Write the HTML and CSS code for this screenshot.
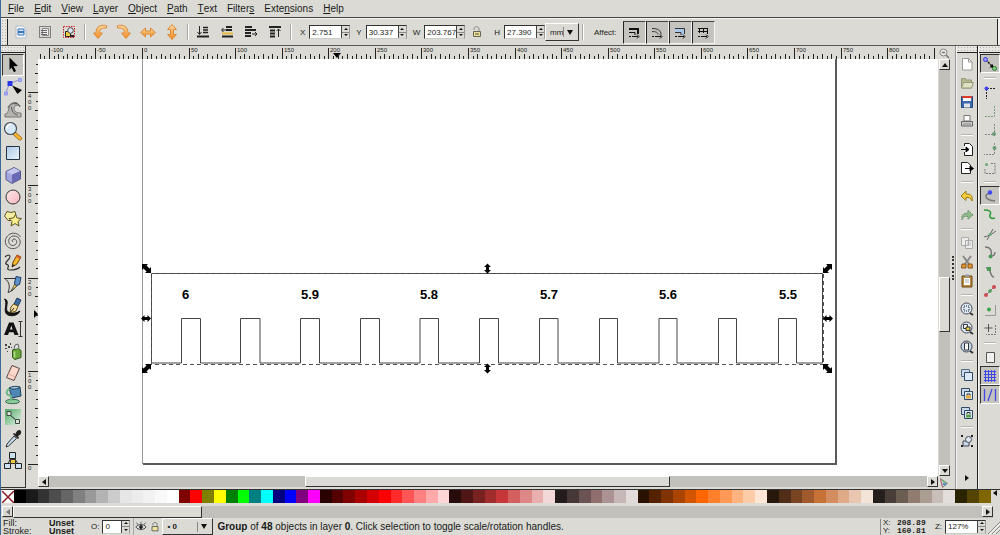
FILE: index.html
```html
<!DOCTYPE html>
<html lang="en">
<head>
<meta charset="utf-8">
<title>Inkscape</title>
<link rel="stylesheet" href="styles.css">
</head>
<body>
<div class="app">
  <nav class="menubar">
    <button><u>F</u>ile</button><button><u>E</u>dit</button><button><u>V</u>iew</button><button><u>L</u>ayer</button><button><u>O</u>bject</button><button><u>P</u>ath</button><button><u>T</u>ext</button><button>Filter<u>s</u></button><button>Exte<u>n</u>sions</button><button><u>H</u>elp</button>
  </nav>

  <div class="toolbar">
    <span class="grip grip-v"></span>
    <div class="tool-group">
      <button aria-label="Select all"><svg viewBox="0 0 16 16"><path d="M3 2h7l3 3v9H3z" fill="#f5f7fa" stroke="#b8bdc4"/><path d="M5 5h6v6H5z" fill="#d4e4f5" stroke="#3b74b5"/><path d="M5 8h6" stroke="#3b74b5" stroke-width="2"/></svg></button>
      <button aria-label="Select all in all layers"><svg viewBox="0 0 16 16"><path d="M2.500 2.500h11v11h-11z" fill="none" stroke="#222" stroke-dasharray="1 1"/><path d="M5.500 4.500h6v7h-6z" fill="#eee" stroke="#888"/><path d="M4 6.500h6M4 8.500h6M4 10.500h6" stroke="#666"/></svg></button>
      <button aria-label="Deselect"><svg viewBox="0 0 16 16"><path d="M2.500 2.500h11v11h-11z" fill="none" stroke="#d21f2b" stroke-dasharray="1.500 1"/><path d="M4.500 7.500h5v5h-5z" fill="#f2cf3b" stroke="#222"/><circle cx="9.500" cy="6.500" r="2.800" fill="#dfe9f5" stroke="#444"/><path d="M10 12h3" stroke="#222" stroke-width="2"/></svg></button>
    </div>
    <span class="vsep"></span>
    <div class="tool-group orange">
      <button aria-label="Rotate left"><svg viewBox="0 0 16 16"><path d="M14.500 1.500C9 .5 4 2 4 9H1.500L6 14.500 10.500 9H7.500C7.500 5 10 4 14.500 4z"/></svg></button>
      <button aria-label="Rotate right"><svg viewBox="0 0 16 16"><path d="M1.500 1.500C7 .5 12 2 12 9h2.500L10 14.500 5.500 9h3C8.500 5 6 4 1.500 4z"/></svg></button>
      <button aria-label="Flip horizontal"><svg viewBox="0 0 16 16"><path d="M.5 8.500L5.500 4v3h5V4l5 4.500-5 4.500v-3h-5v3z"/></svg></button>
      <button aria-label="Flip vertical"><svg viewBox="0 0 16 16"><path d="M8 .5L12.500 5.500h-3v5h3L8 15.500 3.500 10.500h3v-5h-3z"/></svg></button>
    </div>
    <span class="vsep"></span>
    <div class="tool-group dark">
      <button aria-label="Lower to bottom"><svg viewBox="0 0 16 16"><path d="M8 3.500h5M8 6h5M8 8.500h5" stroke-width="1.500"/><path d="M4.500 2v8M2.500 8l2 2.500 2-2.500"/><path d="M2 12.500h12" stroke-width="2"/></svg></button>
      <button aria-label="Lower"><svg viewBox="0 0 16 16"><path d="M7 3h6M7 6h6M3 12.500h11" stroke-width="2"/><path class="gold" d="M3 9.500h11" stroke-width="2"/><path d="M7 6H3M4.500 4L2.500 6l2 2"/></svg></button>
      <button aria-label="Raise"><svg viewBox="0 0 16 16"><path d="M2 3h7M2 6h11M2 9h6M2 12h6" stroke-width="2"/><path d="M9 10h4M12 8l2 2-2 2"/></svg></button>
      <button aria-label="Raise to top"><svg viewBox="0 0 16 16"><path d="M2 3h12M3 6.500h5M3 9.500h5M3 12.500h5" stroke-width="2"/><path d="M11.500 13V5M9.500 7l2-2 2 2"/></svg></button>
    </div>
    <span class="vsep"></span>
    <div class="fields">
      <label>X <span class="spin"><input type="text" value="2.751"><span class="steps"><button aria-label="Increase X"></button><button aria-label="Decrease X"></button></span></span></label>
      <label>Y <span class="spin"><input type="text" value="30.337"><span class="steps"><button aria-label="Increase Y"></button><button aria-label="Decrease Y"></button></span></span></label>
      <label>W <span class="spin"><input type="text" value="203.767"><span class="steps"><button aria-label="Increase W"></button><button aria-label="Decrease W"></button></span></span></label>
    </div>
    <button class="lock" aria-label="Lock proportions"><svg viewBox="0 0 16 16"><path d="M5 6V5c0-3 5-3 5 0v2" fill="none" stroke="#888"/><path d="M4.500 7.500h7v5h-7z" fill="#eadf9a" stroke="#6b6650"/><path d="M6 10h4" stroke="#5b5640"/></svg></button>
    <label>H <span class="spin"><input type="text" value="27.390"><span class="steps"><button aria-label="Increase H"></button><button aria-label="Decrease H"></button></span></span></label>
    <span class="combo unit"><select aria-label="Unit"><option>mm</option></select></span>
    <span class="vsep"></span>
    <span class="affect">Affect:</span>
    <div class="toggles">
      <button aria-label="Scale stroke width"><svg viewBox="0 0 16 16"><path d="M3 4h9v5" fill="none" stroke="#111" stroke-width="2"/><path d="M3 7.500h6V10" fill="none" stroke="#111"/><path d="M3 11.500h2M6 11.500h6M11 9.500l2 2-2 2" fill="none" stroke="#111"/></svg></button>
      <button aria-label="Scale rounded corners"><svg viewBox="0 0 16 16"><path d="M3 3.500c6 0 9 2 9 6M3 6.500c4 0 6 1 6 3" fill="none" stroke="#333"/><path d="M3 11.500h2M6 11.500h6M11 9.500l2 2-2 2" fill="none" stroke="#111"/></svg></button>
      <button aria-label="Move gradients"><svg viewBox="0 0 16 16"><path d="M3 4h9v6H9V7H3z" fill="#a9c8e8"/><path d="M3 3.500h9.500V9M3 7.500h6V10" fill="none" stroke="#333"/><path d="M3 11.500h2M6 11.500h6M11 9.500l2 2-2 2" fill="none" stroke="#111"/></svg></button>
      <button aria-label="Move patterns"><svg viewBox="0 0 16 16"><path d="M3 3.500h10M3 6.500h10M4.500 3v5M8.500 3v5M12.500 3v6" fill="none" stroke="#111"/><path d="M3 11.500h2M6 11.500h6M11 9.500l2 2-2 2" fill="none" stroke="#111"/></svg></button>
    </div>
    <span class="toolbar-end"></span>
  </div>

  <main class="workspace">
    <aside class="toolbox">
      <span class="grip grip-h"></span>
      <button class="active" aria-label="Selector"><svg viewBox="0 0 20 20"><path d="M6.500 2.500l8.500 8.500-4.500.3 2.500 4.700-2 1.200L8.500 12.500 6.500 15z" fill="#000"/></svg></button>
      <button aria-label="Node"><svg viewBox="0 0 20 20"><path d="M3 17C4 9 8 4 18 3" fill="none" stroke="#8a8ac8"/><path d="M1.500 15h3v3h-3zM15.500 1.500h3v3h-3z" fill="#aab0ff" stroke="#8d96ee"/><path d="M4.500 4h5v5h-5z" fill="#2c35e8"/><path d="M9 8.500l10 4.500-4.500 4z" fill="#000"/></svg></button>
      <button aria-label="Tweak"><svg viewBox="0 0 20 20"><path d="M2 15c3 0 3-3 4-6 1-5 8-7 11-2-3-2-6 0-6 2 0 4 3 5 7 5v4H2z" fill="#b5b4b0" stroke="#777"/><path d="M5 9c1-4 5-6 9-5M8.500 8c0 4 2 7 6 8M11 5c3-1 5 0 6 3" fill="none" stroke="#555"/></svg></button>
      <button aria-label="Zoom"><svg viewBox="0 0 20 20"><path d="M11.500 12.500l5.500 5" stroke="#a66a12" stroke-width="4" stroke-linecap="round"/><path d="M12 13l5 4.500" stroke="#f7b733" stroke-width="2.500" stroke-linecap="round"/><circle cx="7.500" cy="7.500" r="6" fill="#d6e8f8" stroke="#45505c" stroke-width="1.200"/><path d="M4 7.500c0-3 2-4 4-4" fill="none" stroke="#fff" stroke-width="1.500"/></svg></button>
      <button aria-label="Rectangle"><svg viewBox="0 0 20 20"><path d="M3.500 3.500h13v13h-13z" fill="url(#blue)" stroke="#243244"/></svg></button>
      <button aria-label="3D box"><svg viewBox="0 0 20 20"><path d="M3 6.500L11 2.500l6.500 3.500v8L9 18.500l-6-4z" fill="#a3a5dc" stroke="#55558a"/><path d="M9 9.500l8-3.500v8L9 18z" fill="#6a6ab4"/><path d="M3.500 7L11 3l6 3-8 3.500z" fill="#c6c8f0"/></svg></button>
      <button aria-label="Ellipse"><svg viewBox="0 0 20 20"><circle cx="10" cy="10" r="7" fill="url(#pink)" stroke="#333"/></svg></button>
      <button aria-label="Star"><svg viewBox="0 0 20 20"><path d="M4 2.500l4 1 4-1 1 4-2 5-6 0L1.500 7z" fill="#f6eca2" stroke="#5d5620"/><path d="M12.500 5.500l1.500 3.500 4.500.5-3.500 3 1 4.500-4-2.500-4 2.500 1-4.500-3-3 4.500-.5z" fill="#fbee8e" stroke="#5d5620"/></svg></button>
      <button aria-label="Spiral"><svg viewBox="0 0 20 20"><path d="M10 11c-1.500-1-.5-3 1-3 2.500 0 3.500 3 2 5-2 2.500-6 1.800-7-1.200C4.800 8 7.500 5 11 5c4 0 7 3.500 6 7.500-1 4-5 5.500-8.500 5C4 17 1.500 12.500 2.500 8.500 3.500 5 7 2.200 10.500 2.200c3 0 5.500 1.300 7 3.800" fill="none" stroke="#555"/></svg></button>
      <button aria-label="Pencil"><svg viewBox="0 0 20 20"><path d="M2 4c4-4 7-1 3 3s-2 4 0 5-3 5 2 5c4 0 7 0 10-3" fill="none" stroke="#333" stroke-width="1.200"/><path d="M9 14l1-5 4-7 4 2-4 7z" fill="#f6b62e" stroke="#704b0c"/><path d="M9 14l.5-3 2.500 1.500z" fill="#222"/><path d="M14 2l4 2-1 2-4-2z" fill="#d85a2a"/></svg></button>
      <button aria-label="Bezier"><svg viewBox="0 0 20 20"><path d="M1 3.500h12M2 3.500c5 4 5 9 3 14 3-1 7-3 8-7" fill="none" stroke="#333"/><path d="M13 1.500l5 1-1.500 7-4 1.500-1-3z" fill="#5b92c8" stroke="#1f3c60"/><path d="M11.500 9.500l2.500 1.500-6 5z" fill="#f0d15a" stroke="#333" stroke-width=".7"/></svg></button>
      <button aria-label="Calligraphy"><svg viewBox="0 0 20 20"><path d="M1.500 2c6 1-.5 10 3.500 13 4 2 9 1 12-1-2 5-10 6-13.500 3C0 13 5 6 1.500 2z" fill="#111" stroke="#111"/><path d="M14 1l4 2-3 6-4-2z" fill="#3c6d9c" stroke="#1f3c60"/><path d="M10.500 7l4.500 2-2 5-6 2 1-6z" fill="#f5dfa0" stroke="#6a5212"/><path d="M7 16l4-5" stroke="#222"/></svg></button>
      <button aria-label="Text"><svg viewBox="0 0 20 20"><path d="M1 16h4l1-2.700h4.500l1 2.700h4L10.500 3.500h-4.500z M7 10.500l1.300-4 1.300 4z" fill="#111" fill-rule="evenodd"/><path d="M15.500 2.500h4M15.500 17.500h4M17.500 3v14" stroke="#333"/></svg></button>
      <button aria-label="Spray"><svg viewBox="0 0 20 20"><path d="M2 3h2v2H2zM5 5h2v2H5zM2 7h2v1H2zM7 2h1v2H7zM8 6h1v1H8zM4 10h1v1H4z" fill="#444"/><path d="M9.500 9l6-1.500 2.500 2v7l-6 2-2.500-2z" fill="#68a83a" stroke="#34591a"/><path d="M11 8l1-4 3-1 1 4" fill="#ddd" stroke="#666"/><path d="M11.500 10.500v6" stroke="#b9e08f" stroke-width="1.500"/></svg></button>
      <button aria-label="Eraser"><svg viewBox="0 0 20 20"><path d="M9 2.500l7.500 3-5.500 12-7.500-3z" fill="#fbd7cc" stroke="#5c4440"/><path d="M5 11l7.500 3" stroke="#e5aa9c"/></svg></button>
      <button aria-label="Paint bucket"><svg viewBox="0 0 20 20"><ellipse cx="9.500" cy="16.500" rx="7" ry="2.200" fill="#8ccb9a" stroke="#336a4a"/><path d="M6 3l11-1 1 9-9 2z" fill="#4e86b4" stroke="#22405c"/><path d="M7 4c-4 1-4 4-2 6l3 1v5" fill="none" stroke="#6db888" stroke-width="2"/><path d="M6 3c3-2 8-2 11-1-2 2-8 3-11 1z" fill="#a8cce4" stroke="#22405c"/></svg></button>
      <button aria-label="Gradient"><svg viewBox="0 0 20 20"><path d="M2 2h16v16H2z" fill="url(#green)"/><path d="M6 7l8 7" stroke="#222"/><path d="M4 4.500h4v4H4zM12.500 12.500h4v4h-4z" fill="#cfe9d4" stroke="#444"/></svg></button>
      <button aria-label="Dropper"><svg viewBox="0 0 20 20"><path d="M3 18l1-3 7-8 2.500 2.500-8 7.500z" fill="#c5d9ea" stroke="#333"/><path d="M10 5l5 5 1-1-1-2c3-1 4-4 2.500-5.500S13 2 12.500 5l-1.500-1z" fill="#222"/></svg></button>
      <button aria-label="Connector"><svg viewBox="0 0 20 20"><path d="M5 13L8 6M15 13l-4-7" stroke="#333"/><path d="M6.500 1.500h6v6h-6zM1.500 12.500h6v5h-6zM12.500 12.500h6v5h-6z" fill="#cfe0f2" stroke="#222"/><path d="M7.500 8.500h5v4h-5z" fill="#f2c83c" stroke="#333"/></svg></button>
    </aside>

    <section class="editor">
      <span class="corner"></span>
      <svg class="ruler ruler-x" id="ruler-x"><path d="M295 7h8l-4 5z"/></svg>
      <button class="corner" aria-label="Zoom drawing"><svg viewBox="0 0 12 12"><circle cx="5.500" cy="5.500" r="3.500" fill="#e8e8e6" stroke="#888"/><path d="M4 5.500h3M8 8l3 3" stroke="#777" stroke-width="1.500"/></svg></button>
      <svg class="ruler ruler-y" id="ruler-y"><path d="M8 251v8l4-4z"/></svg>
      <div class="canvas">
        <svg>
          <g transform="translate(-38 -59)">
            <path d="M142.500 50V464" stroke="#999" fill="none"/>
            <path d="M143 464H836V50" stroke="#5a5a5a" stroke-width="2" fill="none"/>
            <path class="shape" d="M151.500 273.500H822.500V363H796.500V318.500H778.500V363H736.500V318.500H718.500V363H677V318.500H659V363H617.500V318.500H599.500V363H558V318.500H539.500V363H498.500V318.500H479.500V363H438.500V318.500H420V363H379.500V318.500H360.500V363H319.500V318.500H300.500V363H260V318.500H240.500V363H200.500V318.500H181.500V363H151.500z"/>
            <path class="bounds" d="M151.500 273.500H823.500V364.500H151.500z"/>
            <g class="marks"><text x="182" y="299">6</text><text x="301" y="299">5.9</text><text x="420" y="299">5.8</text><text x="540" y="299">5.7</text><text x="659" y="299">5.6</text><text x="779" y="299">5.5</text></g>
            <defs>
              <path id="straight" d="M-5 0L-1.500-3.500V-1.500H1.500V-3.500L5 0 1.500 3.500V1.500H-1.500V3.500z"/>
              <path id="diagonal" d="M-4.500-4.500H1.500L0-3 3 0 4.500-1.500V4.500H-1.500L0 3-3 0-4.500 1.500z"/>
            </defs>
            <use href="#diagonal" transform="translate(146.500 268.500)"/>
            <use href="#straight" transform="translate(487.500 268.500) rotate(90)"/>
            <use href="#diagonal" transform="translate(827.500 268.500) rotate(90)"/>
            <use href="#straight" transform="translate(146 318.500)"/>
            <use href="#straight" transform="translate(828 318.500)"/>
            <use href="#diagonal" transform="translate(146.500 368.500) rotate(90)"/>
            <use href="#straight" transform="translate(487.500 368.500) rotate(90)"/>
            <use href="#diagonal" transform="translate(827.500 368.500)"/>
          </g>
        </svg>
      </div>
      <div class="scroll scroll-y"><button class="up" aria-label="Scroll up"></button><div class="track"><span class="lead"></span><span class="thumb"></span><span class="rest"></span></div><button class="down" aria-label="Scroll down"></button></div>
      <span class="corner"></span>
      <div class="scroll scroll-x"><button class="left" aria-label="Scroll left"></button><div class="track"><span class="lead"></span><span class="thumb"></span><span class="rest"></span></div><button class="right" aria-label="Scroll right"></button></div>
      <button class="corner" aria-label="Colour management"><svg viewBox="0 0 12 12"><path d="M2.500 1.500l7 5-5 4z" fill="#b7d6b4" stroke="#888"/><path d="M2.500 2l2 8" stroke="#c86b8a"/><path d="M4 3l5 3.500" stroke="#5fae5a"/><path d="M5 6.500l3 1" stroke="#5a8acc" stroke-width="2"/></svg></button>
    </section>

    <div class="pane-handle"><span></span></div>

    <aside class="side commands">
      <span class="grip grip-h"></span>
      <button aria-label="New"><svg viewBox="0 0 16 16"><path d="M3.500 2.500h6l3.500 3.500v8H3.500z" fill="#fff" stroke="#999"/><path d="M9.500 2.500V6H13" fill="none" stroke="#999"/></svg></button>
      <button aria-label="Open"><svg viewBox="0 0 16 16"><path d="M2.500 3.500h4l1 1.500h5V13h-10z" fill="#b5b88f" stroke="#96997a"/><path d="M4.500 7.500h10l-2 5.500h-10z" fill="#dfe2c4" stroke="#96997a"/></svg></button>
      <button aria-label="Save"><svg viewBox="0 0 16 16"><path d="M2.500 2.500h11v11h-11z" fill="#3b68b0" stroke="#27497f"/><path d="M4 2h8v5H4z" fill="#fff"/><path d="M3 2h10v2H3z" fill="#dc3a2a"/><path d="M5 9.500h6v4H5z" fill="#dfe3e8"/></svg></button>
      <button aria-label="Print"><svg viewBox="0 0 16 16"><path d="M5 2.500h6V8H5z" fill="#fff" stroke="#777"/><path d="M2.500 8.500h11V13h-11z" fill="#ccc" stroke="#666"/><path d="M4 11h8" stroke="#888"/></svg></button>
      <hr>
      <button aria-label="Import"><svg viewBox="0 0 16 16"><path d="M5.500 5V2.500h5l3 3v9h-8V11" fill="#fff" stroke="#222"/><path d="M2 8.500h7M7 6l3 2.500L7 11z" fill="#000" stroke="#000"/></svg></button>
      <button aria-label="Export"><svg viewBox="0 0 16 16"><path d="M11.500 6V5L8.500 2.500h-6v11h9V11" fill="#fff" stroke="#222"/><path d="M6 8.500h7M11 6l3.500 2.500L11 11z" fill="#000" stroke="#000"/></svg></button>
      <hr>
      <button aria-label="Undo"><svg viewBox="0 0 16 16"><path d="M2 8l5-5v3c5 0 7 2 6 7-1-3-3-4-6-3.500V12.500z" fill="#f3cf3a" stroke="#9a7a12"/></svg></button>
      <button aria-label="Redo"><svg viewBox="0 0 16 16"><path d="M14 8L9 3v3C4 6 2 8 3 13c1-3 3-4 6-3.500v3z" fill="#8fb98a" stroke="#6d8c68" stroke-dasharray="1.500 1"/></svg></button>
      <hr>
      <button aria-label="Copy"><svg viewBox="0 0 16 16"><path d="M2.500 2.500h7v8h-7zM6.500 5.500h7v8h-7z" fill="#eee" stroke="#aaa"/><path d="M8 8h4M8 10h4" stroke="#bbb"/></svg></button>
      <button aria-label="Cut"><svg viewBox="0 0 16 16"><path d="M4 2l6 8M12 2L6 10" stroke="#888" stroke-width="2"/><path d="M3 10h4v4H2.500zM9 10h4l.5 4H9z" fill="#e0973a" stroke="#8a5414"/></svg></button>
      <button aria-label="Paste"><svg viewBox="0 0 16 16"><path d="M3 3h10v11H3z" fill="#b98840" stroke="#6b4a16"/><path d="M5 5h6v7H5z" fill="#fff"/><path d="M6 1.500h4V4H6z" fill="#999"/><path d="M6 7h4M6 9h4" stroke="#aaa"/></svg></button>
      <hr>
      <button aria-label="Zoom selection"><svg viewBox="0 0 16 16"><circle cx="7.500" cy="7.500" r="5.500" fill="#dce9f5" stroke="#445"/><path d="M5 5h5v5H5z" fill="none" stroke="#223" stroke-dasharray="1 1"/><path d="M11 12l3 2" stroke="#333" stroke-width="2"/></svg></button>
      <button aria-label="Zoom drawing area"><svg viewBox="0 0 16 16"><circle cx="7.500" cy="7.500" r="5.500" fill="#dce9f5" stroke="#445"/><path d="M4.500 4.500h4v4h-4z" fill="#fff" stroke="#333"/><path d="M7 7h4v3.500H7z" fill="#efcd4a" stroke="#333"/><path d="M11 12l3 2" stroke="#333" stroke-width="2"/></svg></button>
      <button aria-label="Zoom page"><svg viewBox="0 0 16 16"><circle cx="7.500" cy="7.500" r="5.500" fill="#c5d7ea" stroke="#445"/><path d="M5.500 4h4v7h-4z" fill="#fff" stroke="#333"/><path d="M11 12l3 2" stroke="#333" stroke-width="2"/></svg></button>
      <hr>
      <button aria-label="Duplicate"><svg viewBox="0 0 16 16"><path d="M2.500 2.500h8v7h-8z" fill="#c9d9ea" stroke="#556c88"/><path d="M5.500 5.500h8v8h-8z" fill="#dbe8f5" stroke="#334a68"/></svg></button>
      <button aria-label="Clone"><svg viewBox="0 0 16 16"><path d="M2.500 2.500h8v7h-8z" fill="#c9d9ea" stroke="#334a68"/><path d="M5.500 5.500h8v8h-8z" fill="#dbe8f5" stroke="#334a68"/><path d="M8 9.500V8h3v1.500" fill="none" stroke="#333"/><path d="M7 9.500h5v3H7z" fill="#e8a93a"/></svg></button>
      <button aria-label="Unlink clone"><svg viewBox="0 0 16 16"><path d="M2.500 2.500h8v7h-8z" fill="#c9d9ea" stroke="#334a68"/><path d="M5.500 5.500h8v8h-8z" fill="#dbe8f5" stroke="#334a68"/><path d="M8 9V7.500h3V9" fill="none" stroke="#333"/><path d="M7 9.500h5v3H7z" fill="#5ba04b"/></svg></button>
      <hr>
      <button aria-label="Group"><svg viewBox="0 0 16 16"><path d="M2 2h2v2H2zM12 2h2v2h-2zM2 12h2v2H2zM12 12h2v2h-2z" fill="#222"/><path d="M4 8h6v5H4z" fill="#c9d9ea" stroke="#445"/><circle cx="9.500" cy="6.500" r="3" fill="#dfe9f3" stroke="#445"/></svg></button>
      <button class="more" aria-label="More commands"></button>
    </aside>

    <aside class="side snaps">
      <span class="grip grip-h"></span>
      <button class="active" aria-label="Enable snapping"><svg viewBox="0 0 16 16"><path d="M4 4l8 8" stroke="#111" stroke-width="1.500" stroke-dasharray="2 1"/><path d="M11 8v3.500H7.500z"/><circle cx="3.500" cy="3.500" r="2" fill="#9a9aff" stroke="#3b3be0"/><circle cx="12.500" cy="12.500" r="2" fill="#8cd08c" stroke="#1d7a24"/></svg></button>
      <hr>
      <button aria-label="Snap bounding boxes"><svg viewBox="0 0 16 16"><path d="M4.500 5v10M5 4.500h9" stroke="#222" stroke-dasharray="2 1"/><circle cx="4.500" cy="4.500" r="2" fill="#3f46f0"/></svg></button>
      <button aria-label="Snap to edges"><svg viewBox="0 0 16 16"><path d="M12.500 3v10.500H2" fill="none" stroke="#78a07c" stroke-dasharray="2 1"/></svg></button>
      <button aria-label="Snap to corners"><svg viewBox="0 0 16 16"><path d="M12.500 2v10.500H2" fill="none" stroke="#888" stroke-dasharray="2 1"/><circle cx="12" cy="12" r="2" fill="#6d9a74"/></svg></button>
      <button aria-label="Snap edge midpoints"><svg viewBox="0 0 16 16"><path d="M12.500 2v11.500H2" fill="none" stroke="#888" stroke-dasharray="2 1"/><circle cx="12.500" cy="7" r="2" fill="#6d9a74"/></svg></button>
      <button aria-label="Snap box centers"><svg viewBox="0 0 16 16"><path d="M9 3.500h4v10H3V9" fill="none" stroke="#777" stroke-dasharray="2 1"/><circle cx="4.500" cy="4.500" r="1.500" fill="#6aa873"/></svg></button>
      <hr>
      <button class="active" aria-label="Snap nodes"><svg viewBox="0 0 16 16"><path d="M8 5C2 6 2 12 13 13" fill="none" stroke="#777" stroke-width="1.500"/><circle cx="8" cy="4.500" r="2.200" fill="#3f46f0"/></svg></button>
      <button aria-label="Snap to paths"><svg viewBox="0 0 16 16"><path d="M2 3c5 0 8 1 6 5-1 3 2 4 5 3" fill="none" stroke="#2f9a3b" stroke-width="1.500"/></svg></button>
      <button aria-label="Snap intersections"><svg viewBox="0 0 16 16"><path d="M2 11c5-1 8-3 12-6M5 14l6-11" fill="none" stroke="#666"/><circle cx="8" cy="8.500" r="1.500" fill="#6aa873"/></svg></button>
      <button aria-label="Snap cusp nodes"><svg viewBox="0 0 16 16"><path d="M3 2c6 0 7 4 6 9M9 11c2 0 4-1 4-4" fill="none" stroke="#777" stroke-width="1.500"/><circle cx="8.500" cy="11.500" r="2" fill="#4d9a58"/></svg></button>
      <button aria-label="Snap smooth nodes"><svg viewBox="0 0 16 16"><path d="M4 4c6-1 3 9 8 9" fill="none" stroke="#777" stroke-width="1.500"/><path d="M5 3h4v4H5z" fill="#4d9a58"/></svg></button>
      <button aria-label="Snap line midpoints"><svg viewBox="0 0 16 16"><path d="M3 13L13 3" stroke="#777"/><circle cx="4" cy="12" r="2" fill="#cf4a55"/><circle cx="8" cy="8" r="1.800" fill="#4d9a58"/><circle cx="12" cy="4" r="2" fill="#cf4a55"/></svg></button>
      <button aria-label="Snap object centers"><svg viewBox="0 0 16 16"><path d="M13.500 3v10.500H3" fill="none" stroke="#999"/><circle cx="7" cy="7.500" r="2" fill="#3da24a"/></svg></button>
      <button aria-label="Snap rotation centers"><svg viewBox="0 0 16 16"><path d="M6.500 3v8M2.500 7h8" stroke="#555"/><path d="M13.500 4v9.500H4" fill="none" stroke="#777" stroke-dasharray="2 1"/></svg></button>
      <hr>
      <button aria-label="Snap to page border"><svg viewBox="0 0 16 16"><path d="M4.500 3.500h8v10h-8z" fill="#f0f0ef" stroke="#555"/></svg></button>
      <button class="active" aria-label="Snap to grids"><svg viewBox="0 0 16 16"><path d="M2 3.500h12M2 6.500h12M2 9.500h12M2 12.500h12M3.500 2v12M6.500 2v12M9.500 2v12M12.500 2v12" stroke="#4148e4"/></svg></button>
      <button class="active" aria-label="Snap to guides"><svg viewBox="0 0 16 16"><path d="M2.500 2v12M6 14l4-12M13.500 2v12" stroke="#4148e4" stroke-width="1.300"/></svg></button>
    </aside>
  </main>

  <div class="palette">
    <button class="none" aria-label="No colour"><svg viewBox="0 0 12 12"><path d="M0 0l12 12M12 0L0 12" stroke="#8a1c24" stroke-width="1.500"/></svg></button>
    <div class="swatches" id="swatches"></div>
    <button class="palette-menu" aria-label="Palette menu"></button>
  </div>
  <div class="scroll palette-scroll"><button class="left dim" aria-label="Scroll palette left"></button><div class="track"><span class="thumb"></span><span class="rest"></span></div><button class="right" aria-label="Scroll palette right"></button></div>

  <footer class="status">
    <dl class="style"><dt>Fill:</dt><dd>Unset</dd><dt>Stroke:</dt><dd>Unset</dd></dl>
    <label class="opacity">O: <span class="spin"><input type="text" value="0"><span class="steps"><button aria-label="Increase opacity"></button><button aria-label="Decrease opacity"></button></span></span></label>
    <div class="layer">
      <button aria-label="Layer visibility"><svg viewBox="0 0 14 14"><path d="M1 7c3-4 9-4 12 0-3 4-9 4-12 0z" fill="#ddd" stroke="#333"/><circle cx="7" cy="7" r="2.200" fill="#222"/><path d="M3 4L2 2M7 3V1M11 4l1-2" stroke="#444"/></svg></button>
      <button aria-label="Layer lock"><svg viewBox="0 0 14 14"><path d="M4.500 5V4c0-3 5-3 5 0v2" fill="none" stroke="#666"/><path d="M3.500 6.500h7v5h-7z" fill="#efe59b" stroke="#555"/></svg></button>
      <span class="combo"><select aria-label="Current layer"><option>• 0</option></select></span>
    </div>
    <p class="message"><b>Group</b> of <b>48</b> objects in layer <b>0</b>. Click selection to toggle scale/rotation handles.</p>
    <dl class="coords"><dt>X:</dt><dd>208.89</dd><dt>Y:</dt><dd>160.81</dd></dl>
    <label class="zoom">Z: <span class="spin"><input type="text" value="127%"><span class="steps"><button aria-label="Zoom in"></button><button aria-label="Zoom out"></button></span></span></label>
    <svg class="resize" viewBox="0 0 12 14"><path d="M0 14L12 2M4 14l8-8M8 14l4-4" stroke="#888"/><path d="M1.500 14L12 3.500M5.500 14L12 7.500" stroke="#fff"/></svg>
  </footer>
</div>

<svg class="defs"><defs>
  <linearGradient id="blue" x2="1" y2="1"><stop stop-color="#a9c9e8"/><stop offset="1" stop-color="#eef5fc"/></linearGradient>
  <linearGradient id="pink" x2="1" y2="1"><stop stop-color="#fbeaec"/><stop offset="1" stop-color="#f7b3bb"/></linearGradient>
  <linearGradient id="green" x2="1" y2="1"><stop stop-color="#4fa864"/><stop offset="1" stop-color="#e2f3e5"/></linearGradient>
  <linearGradient id="amber" x2="0" y2="1"><stop stop-color="#fcd9a0"/><stop offset="1" stop-color="#f08a1d"/></linearGradient>
</defs></svg>
<script src="script.js"></script>
</body>
</html>
```
FILE: styles.css
```css
* { box-sizing: border-box; }
body {
  margin: 0;
  background: #dbdad5;
  color: #1a1a1a;
  font: 8px "Liberation Sans", Arial, sans-serif;
}
button, input, select {
  margin: 0;
  padding: 0;
  border: 0;
  border-radius: 0;
  background: none;
  color: inherit;
  font: inherit;
}
button { display: flex; align-items: center; justify-content: center; }
svg { display: block; }
.defs { position: absolute; width: 0; height: 0; }

.app {
  display: flex;
  flex-direction: column;
  height: 100vh;
  border-left: 1px solid #3c6a96;
}

.menubar {
  display: flex;
  gap: 10px;
  height: 18px;
  padding-left: 7px;
  border-bottom: 1px solid #444;
  font-size: 10px;
}

.grip {
  flex: none;
  background-color: #e6e5e1;
  background-image: radial-gradient(#b5b4af 1px, transparent 1px);
  background-size: 3px 3px;
}
.grip-v { width: 7px; align-self: stretch; border-right: 1px solid #222; }
.grip-h { height: 7px; align-self: stretch; border-bottom: 1px solid #222; }

.toolbar {
  display: flex;
  align-items: center;
  height: 28px;
  border-top: 1px solid #f4f4f2;
  border-bottom: 1px solid #555;
}
.tool-group { display: flex; }
.tool-group button { width: 24px; height: 24px; }
.grip + .tool-group { margin-left: 1px; }
.toolbar svg { width: 16px; height: 16px; }
.orange path { fill: url(#amber); stroke: #dc8a3a; }
.dark path { fill: none; stroke: #222; }
.dark .gold { stroke: #e8b93f; }
.vsep {
  width: 2px;
  height: 16px;
  margin: 0 2px 0 3px;
  border-left: 1px solid #a9a8a3;
  border-right: 1px solid #fff;
}
.fields { display: flex; gap: 6px; margin-left: 6px; }
label { display: flex; align-items: center; gap: 4px; }
.spin {
  display: flex;
  width: 41px;
  height: 14px;
  border: 1px solid #333;
  border-right-color: #999;
  border-bottom-color: #ccc;
  background: #fff;
}
.spin input { flex: 1; min-width: 0; padding-left: 2px; }
.steps { display: flex; flex-direction: column; width: 8px; border-left: 1px solid #444; background: #dbdad5; }
.steps button { flex: 1; }
.steps button + button { border-top: 1px solid #888; }
.steps button::after { content: ""; border: 2px solid transparent; border-top: 0; border-bottom: 2px solid #111; }
.steps button + button::after { border-bottom: 0; border-top: 2px solid #111; }
.lock { margin: 0 9px 0 4px; }
.combo {
  display: flex;
  align-items: center;
  position: relative;
  border: 1px solid;
  border-color: #fff #333 #333 #fff;
}
.combo select { appearance: none; width: 100%; height: 100%; }
.combo::after {
  content: "";
  position: absolute;
  right: 5px;
  border: 3px solid transparent;
  border-bottom: 0;
  border-top: 5px solid #111;
}
.combo::before { content: ""; position: absolute; right: 14px; height: 10px; border-left: 1px solid #888; }
.unit { width: 34px; height: 18px; }
.unit select { padding-left: 4px; }
.affect { margin: 0 6px 0 8px; }
.toggles { display: flex; align-self: stretch; padding: 2px 0 1px; }
.toggles button {
  width: 23px;
  border: 1px solid;
  border-color: #444 #f4f4f2 #f4f4f2 #222;
  background: #c4c3bd;
}
.toolbar-end { width: 3px; align-self: stretch; margin-left: auto; border-left: 1px solid #222; background: #f0f0ee; }

.workspace { display: flex; flex: 1; min-height: 0; border-bottom: 1px solid #333; }
.toolbox {
  display: flex;
  flex-direction: column;
  width: 25px;
  align-items: center;
  margin-bottom: 1px;
  border-right: 1px solid #333;
  border-bottom: 1px solid #333;
}
.toolbox .grip, .side .grip { margin-bottom: 1px; }
.toolbox button { width: 22px; height: 22px; flex: none; }
.toolbox svg { width: 20px; height: 20px; }
.active { border: 1px solid; border-color: #333 #fff #fff #333; background: #c4c3bd; }

.editor {
  display: grid;
  flex: 1;
  min-width: 0;
  grid-template: 13px minmax(0, 1fr) 13px / 12px minmax(0, 1fr) 12px;
}
.ruler { width: 100%; height: 100%; overflow: hidden; }
.ruler text { font-size: 6px; fill: #222; }
.ruler line { stroke: #222; stroke-width: 1px; shape-rendering: crispEdges; }
.corner svg { width: 12px; height: 12px; }
.canvas { background: #fff; overflow: hidden; }
.canvas svg { width: 100%; height: 100%; }
.shape { fill: none; stroke: #444; stroke-width: 1px; }
.bounds { fill: none; stroke: #555; stroke-width: 1px; stroke-dasharray: 4 3; shape-rendering: crispEdges; }
.marks { font-size: 13px; font-weight: bold; fill: #000; }

.scroll { display: flex; background: #c1c0ba; }
.scroll button { flex: none; width: 11px; height: 11px; border: 1px solid; border-color: #fff #333 #333 #fff; background: #dbdad5; }
.scroll button::after, .more::after, .palette-menu::after { content: ""; border: 3px solid transparent; }
.scroll .up::after { border-top: 0; border-bottom: 4px solid #111; }
.scroll .down::after { border-bottom: 0; border-top: 4px solid #111; }
.scroll .left::after, .palette-menu::after { border-left: 0; border-right: 4px solid #111; }
.scroll .dim::after { border-right-color: #777; }
.scroll .right::after, .more::after { border-right: 0; border-left: 4px solid #111; }
.track { display: flex; flex: 1; }
.thumb { border: 1px solid; border-color: #fff #333 #333 #fff; background: #dbdad5; }
.scroll-y { flex-direction: column; margin: 0 0 0 1px; }
.scroll-y .track { flex-direction: column; }
.scroll-x { margin-bottom: 2px; }
.scroll-y .lead { flex: 208; }
.scroll-y .thumb { flex: 53; }
.scroll-y .rest { flex: 133; }
.scroll-x .lead { flex: 257; }
.scroll-x .thumb { flex: 363; }
.scroll-x .rest { flex: 258; }

.pane-handle { display: flex; align-items: center; justify-content: center; width: 6px; border-right: 1px solid #999; }
.pane-handle span { width: 2px; height: 24px; border-left: 2px dotted #333; }

.side { display: flex; flex-direction: column; align-items: center; width: 22px; border-right: 1px solid #222; border-left: 1px solid #f4f4f2; }
.snaps { border-right: 0; }
.side button { width: 20px; height: 19px; flex: none; }
.side svg { width: 16px; height: 16px; }
.side hr { width: 12px; height: 2px; margin: 4px 0 3px; border: 0; border-top: 1px solid #b5b4af; border-bottom: 1px solid #fff; flex: none; }
.side .more { margin-top: auto; margin-bottom: 2px; }

.palette { display: flex; height: 13px; margin-left: 1px; }
.palette .none { width: 12px; background: #fff; }
.palette .none svg { width: 12px; height: 12px; }
.swatches { display: flex; flex: 1; }
.swatches button { flex: 1; }
.palette-menu { width: 10px; height: 6px; }
.palette-scroll { height: 12px; margin: 3px 7px 0 1px; }
.palette-scroll .thumb { flex: 188; }
.palette-scroll .rest { flex: 782; }

.status { display: flex; align-items: center; height: 17px; }
dl { display: grid; margin: 0; line-height: 8px; }
dd { margin: 0; }
.style { grid-template-columns: 46px 42px; padding-left: 2px; font-size: 9px; }
.style dd { font-weight: bold; }
.opacity { gap: 3px; }
.opacity .spin { width: 28px; }
.layer { display: flex; align-items: center; margin-left: 3px; border-left: 1px solid #aaa; }
.layer button { width: 14px; height: 14px; }
.layer svg { width: 12px; height: 12px; }
.layer .combo { width: 51px; height: 17px; }
.layer select { padding-left: 4px; font-weight: bold; }
.message { flex: 1; margin: 0 0 0 4px; font-size: 10px; white-space: nowrap; }
.coords { grid-template-columns: 14px 38px; padding-left: 2px; border-left: 1px solid #888; }
.coords dd { font-family: "Liberation Mono", monospace; font-weight: bold; }
.zoom { gap: 3px; }
.resize { width: 12px; height: 14px; margin-left: 2px; }
```
FILE: script.js
```js
const SVG = "http://www.w3.org/2000/svg";

function add(parent, name, attrs, text) {
  const el = document.createElementNS(SVG, name);
  for (const key in attrs) el.setAttribute(key, attrs[key]);
  if (text) el.textContent = text;
  parent.appendChild(el);
}

const rulerX = document.getElementById("ruler-x");
const width = rulerX.getBoundingClientRect().width;
for (let i = -22; ; i++) {
  const x = Math.round(104 + i * 4.657);
  if (x >= width) break;
  const length = i % 10 === 0 ? 11 : i % 2 === 0 ? 5 : 3;
  add(rulerX, "line", { x1: x + 0.5, x2: x + 0.5, y1: 13 - length, y2: 13 });
  if (i % 10 === 0 && x + 12 < width) add(rulerX, "text", { x: x + 2, y: 6 }, String(i * 5));
}

const rulerY = document.getElementById("ruler-y");
for (let i = 0; ; i++) {
  const y = Math.round(405 - i * 9.31);
  if (y < 0) break;
  const length = i % 10 === 0 ? 10 : i % 2 === 0 ? 3 : 2;
  add(rulerY, "line", { x1: 12 - length, x2: 12, y1: y + 0.5, y2: y + 0.5 });
  if (i % 10 === 0) {
    [...String(i * 10)].forEach((digit, n) => add(rulerY, "text", { x: 2, y: y + 6 + n * 6 }, digit));
  }
}

const colours = `000000 1a1a1a 333333 4d4d4d 666666 808080 999999 b3b3b3 cccccc e6e6e6 ececec f2f2f2 f9f9f9 ffffff
800000 ff0000 808000 ffff00 008000 00ff00 008080 00ffff 000080 0000ff 800080 ff00ff
2b0000 550000 800000 aa0000 d40000 ff0000 ff2a2a ff5555 ff8080 ffaaaa ffd5d5
280b0b 501616 782121 a02c2c c83737 d35f5f de8787 e9afaf f4d7d7
241c1c 483737 6c5353 916f6f ac9393 c8b7b7 e3dbdb
2b1100 552200 803300 aa4400 d45500 ff6600 ff7f2a ff9955 ffb380 ffccaa ffe6d5
28170b 502d16 784421 a05a2c c87137 d38d5f deaa87 e9c6af f4e3d7
241f1c 483e37 6c5d53 917c6f ac9d93 c8beb7 e3dedb
2b2200 554400 806600`.split(/\s+/);
const swatches = document.getElementById("swatches");
for (const colour of colours) {
  const button = document.createElement("button");
  button.style.background = "#" + colour;
  button.setAttribute("aria-label", "#" + colour);
  swatches.appendChild(button);
}
```
